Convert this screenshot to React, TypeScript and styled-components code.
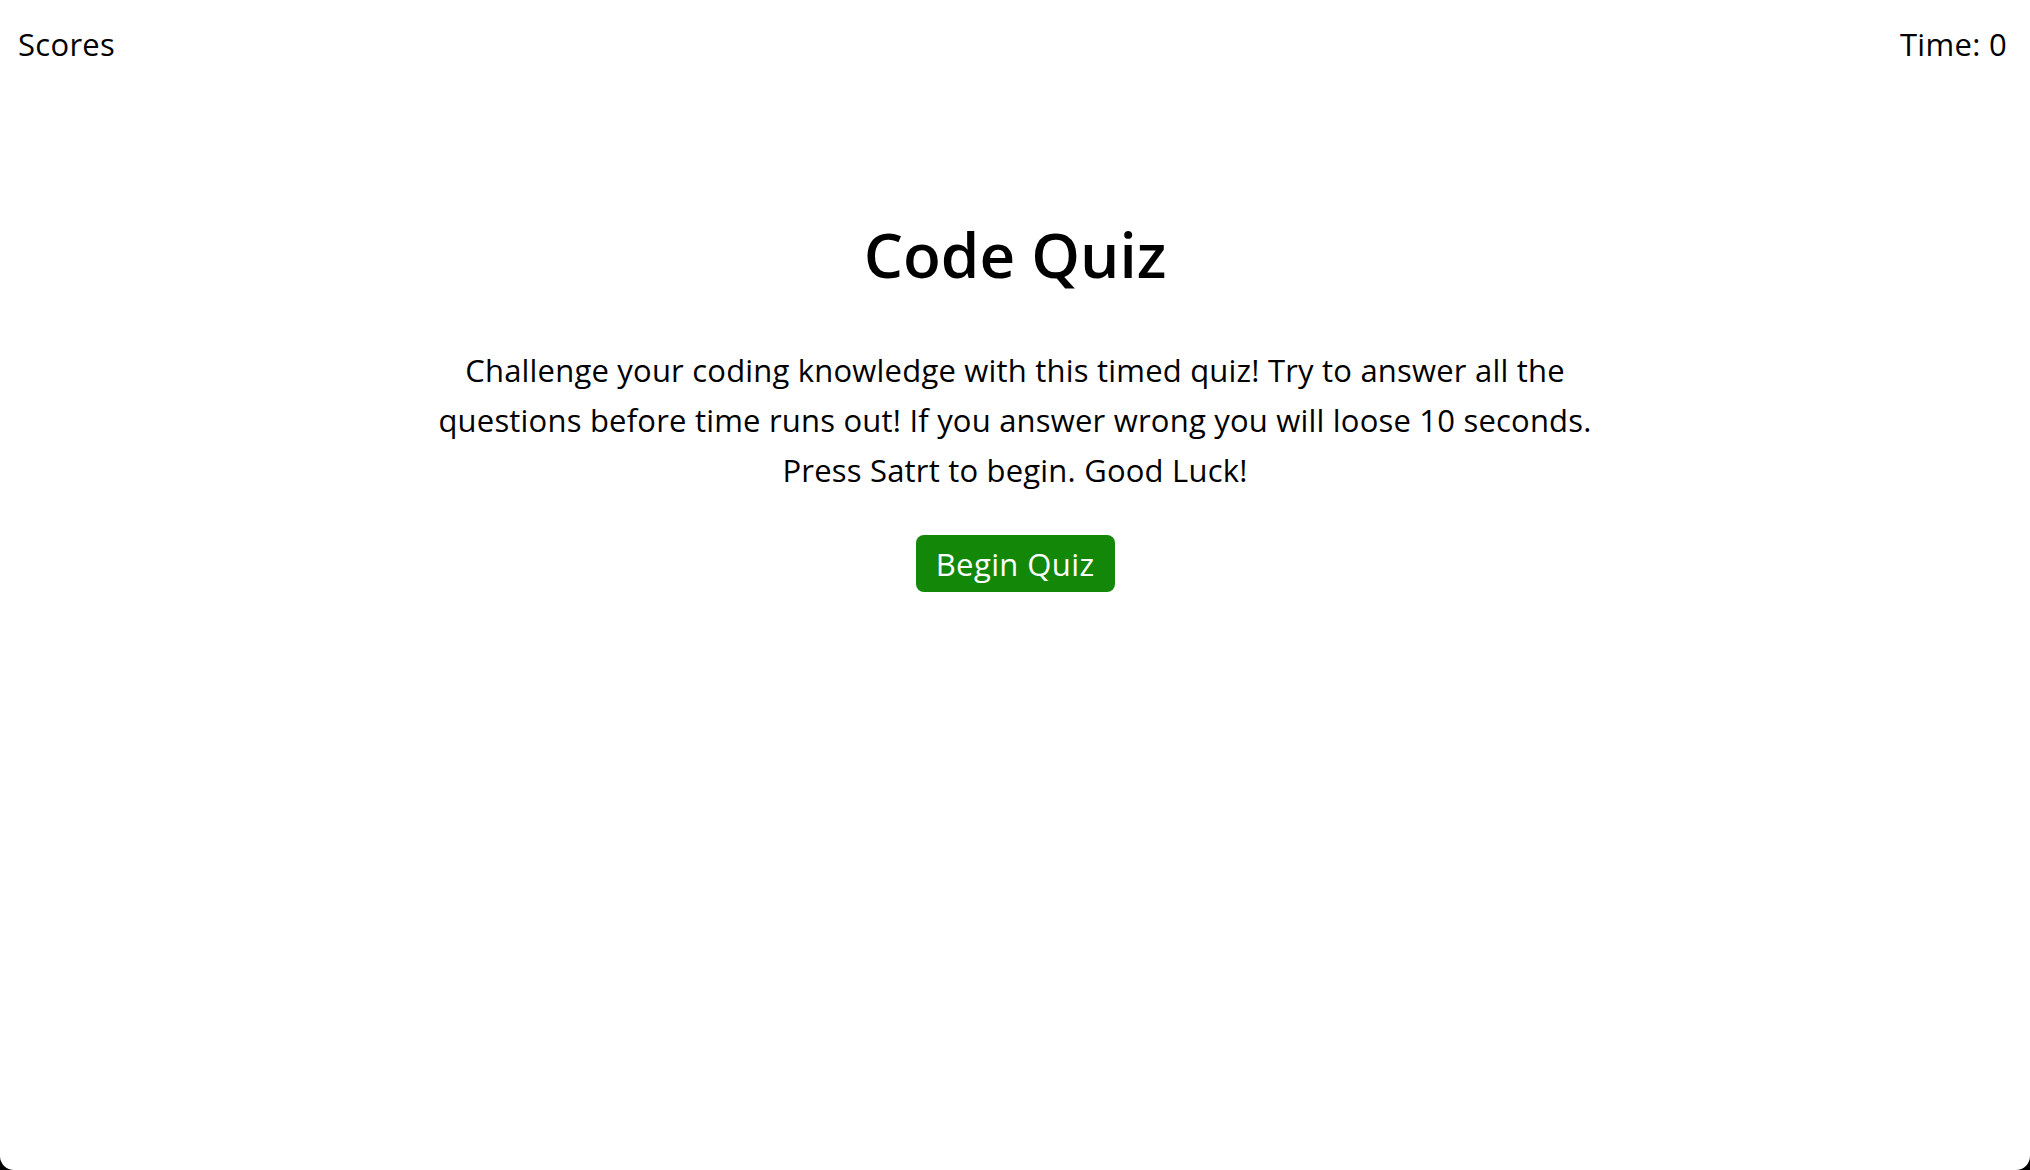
import React from "react";
import styled, { createGlobalStyle } from "styled-components";

const Global = createGlobalStyle`
  html, body { margin: 0; padding: 0; background: #000; }
  body { font-family: "Open Sans", Roboto, sans-serif; color: #000; }
`;

const Page = styled.div`
  width: 2030px;
  height: 1170px;
  background: #fff;
  border-radius: 0 0 14px 14px;
  overflow: hidden;
  display: flex;
  flex-direction: column;
`;

const Header = styled.header`
  display: flex;
  justify-content: space-between;
  align-items: center;
  padding: 26px 23px 0 18px;
  font-size: 31px;
  line-height: 1.2;
  letter-spacing: 0.3px;
`;

const HeaderItem = styled.div``;

const Main = styled.main`
  display: flex;
  flex-direction: column;
  align-items: center;
  text-align: center;
  padding-top: 153px;
`;

const Title = styled.h1`
  margin: 0;
  font-size: 62px;
  font-weight: 600;
  line-height: 1.24;
`;

const Intro = styled.p`
  margin: 52px 0 0;
  width: 1200px;
  font-size: 31px;
  line-height: 50px;
  letter-spacing: 0.2px;
`;

const StartButton = styled.button`
  margin-top: 40px;
  width: 199px;
  height: 57px;
  border: none;
  border-radius: 8px;
  background: #138808;
  color: #fff;
  font-family: inherit;
  font-size: 31px;
  letter-spacing: 0.4px;
  cursor: pointer;
`;

export default function App() {
  return (
    <>
      <Global />
      <Page>
        <Header>
          <HeaderItem>Scores</HeaderItem>
          <HeaderItem>Time: 0</HeaderItem>
        </Header>
        <Main>
          <Title>Code Quiz</Title>
          <Intro>
            Challenge your coding knowledge with this timed quiz! Try to answer all the questions before time runs out! If you answer wrong you will loose 10 seconds. Press Satrt to begin. Good Luck!
          </Intro>
          <StartButton>Begin Quiz</StartButton>
        </Main>
      </Page>
    </>
  );
}
